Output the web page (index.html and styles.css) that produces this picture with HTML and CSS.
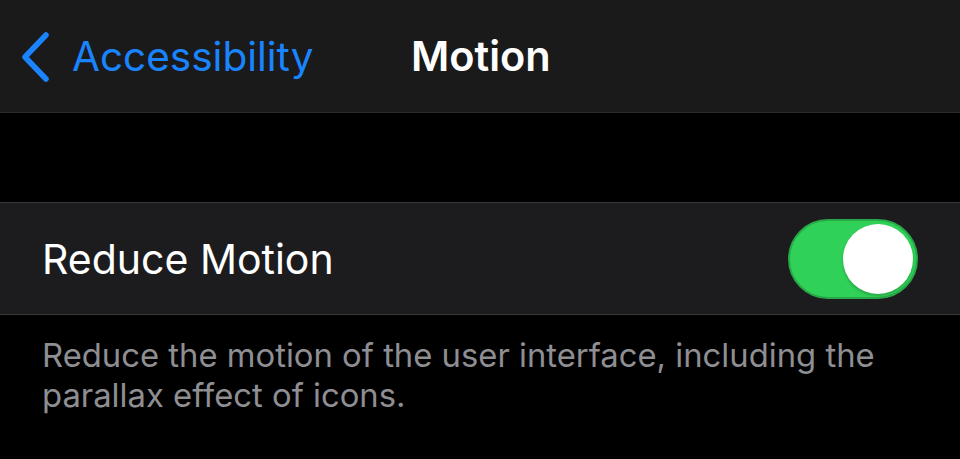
FILE: index.html
```html
<!DOCTYPE html>
<html lang="en">
<head>
	<meta charset="UTF-8">
	<title>Motion</title>
	<link rel="stylesheet" href="styles.css">
</head>
<body>
	<div class="navbar">
		<a class="back" href="javascript:;">
			<svg class="chevron" width="30" height="50" viewBox="0 0 30 50">
				<path d="M26 3 L5 25 L26 47" fill="none" stroke="#1a84ff" stroke-width="5.5" stroke-linecap="round" stroke-linejoin="round"/>
			</svg>
			<span>Accessibility</span>
		</a>
		<div class="title">Motion</div>
	</div>

	<div class="gap"></div>

	<div class="group">
		<div class="row">
			<span class="label">Reduce Motion</span>
			<div class="switch on"><div class="knob"></div></div>
		</div>
	</div>

	<p class="footer">Reduce the motion of the user interface, including the parallax effect of icons.</p>
</body>
</html>
```

FILE: styles.css
```css
body{ margin:0; background:#000; font-family:Inter, "Noto Sans", sans-serif; -webkit-font-smoothing:antialiased;}
.navbar{ height:112px; background:#1a1a1a; border-bottom:1px solid #2c2c2e; display:flex; align-items:center; position:relative;}
.back{ display:flex; align-items:center; color:#1a84ff; text-decoration:none; font-size:40.5px; padding-left:20px;}
.back .chevron{ margin-right:22px; margin-top:2px;}
.title{ position:absolute; left:411px; top:0; height:112px; line-height:112px; color:#fff; font-size:41.5px; font-weight:600;}
.gap{ height:89px;}
.group{ background:#1c1c1e; border-top:1px solid #38383a; border-bottom:1px solid #38383a;}
.row{ height:111px; display:flex; align-items:center; justify-content:space-between; padding:0 42px 0 42px;}
.label{ color:#fff; font-size:41px;}
.switch{ width:130px; height:80px; border-radius:40px; background:#30d158; box-sizing:border-box; border:2px solid #27a948; position:relative;}
.switch .knob{ position:absolute; right:3px; top:3px; width:70px; height:70px; border-radius:50%; background:#fff; box-shadow:0 2px 3px rgba(0,0,0,0.2);}
.footer{ margin:0; padding:20px 42px 0 42px; color:#8e8e93; font-size:32.8px; line-height:40px; width:860px;}
```
